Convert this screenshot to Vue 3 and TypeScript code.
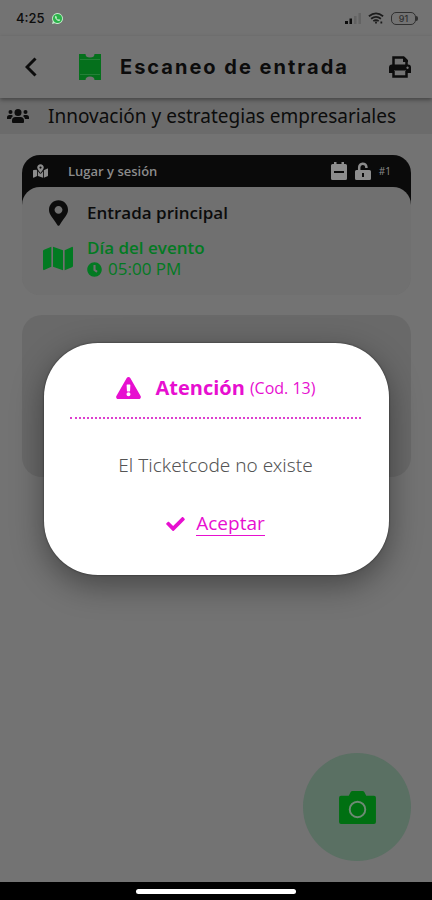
<script setup lang="ts">
import { ref } from 'vue'

interface Alert {
  title: string
  code: string
  message: string
}

const alert = ref<Alert | null>({
  title: 'Atención',
  code: '(Cod. 13)',
  message: 'El Ticketcode no existe',
})

const eventName = 'Innovación y estrategias empresariales'

function accept(): void {
  alert.value = null
}
</script>

<template>
  <div class="app">
    <div class="status">
      <span class="time">4:25</span>
      <svg class="chat" viewBox="0 0 24 24" aria-hidden="true">
        <path class="chat-edge" d="M12 0a12 12 0 1 1-6 22.4L0 24l1.7-6A12 12 0 0 1 12 0z" />
        <circle class="chat-fill" cx="12" cy="12" r="10" />
        <path class="chat-edge" d="M8.500 6c-1.500.5-2.300 2-1.800 3.800 1 3.500 3.800 6.300 7.500 7.400 1.800.5 3.300-.3 3.800-1.900l-3-2-1.500 1.300c-1.800-.8-3-2-3.800-3.700L11 9.300z" />
      </svg>
      <span class="spacer"></span>
      <svg class="signal" viewBox="0 0 16 12" aria-hidden="true">
        <path class="on" d="M0 9h3v3H0zM4.500 6.500h2.500V12H4.500z" />
        <path class="off" d="M9 4h2.500v8H9zM13.500 1H16v11h-2.500z" />
      </svg>
      <svg class="wifi" viewBox="0 0 18 14" aria-hidden="true">
        <path d="M1 4.500Q9-2 17 4.500M3.500 7.300Q9 3 14.500 7.300M6 10Q9 7.600 12 10" />
        <path d="M9 10.500v2M15 10.500v2" />
      </svg>
      <span class="battery">91</span>
    </div>

    <header class="header">
      <button class="icon-button" type="button" aria-label="Atrás">
        <svg class="back" viewBox="0 0 12 20" aria-hidden="true"><path d="M10.500 1.500 2 10l8.500 8.500" /></svg>
      </button>
      <svg class="ticket" viewBox="0 0 22 28" aria-hidden="true">
        <path d="M0 1h6.500a4.500 3.500 0 0 0 9 0H22v26h-6.500a4.500 3.500 0 0 0-9 0H0z" />
        <path class="perforation" d="M1 6.500h20M1 21.500h20" />
      </svg>
      <h1>Escaneo de entrada</h1>
      <button class="icon-button" type="button" aria-label="Imprimir">
        <svg class="printer" viewBox="0 0 22 22" aria-hidden="true">
          <path class="line" d="M4.500 9V1.500h10l3 3V9M4.500 15v5.500h13V15" />
          <path fill-rule="evenodd" d="M14 1h1.500L19 4.500V6h-5zM3 8.500h16a3 3 0 0 1 3 3V17h-5v-2.500H5V17H0v-5.500a3 3 0 0 1 3-3zM18.500 10.500a1.200 1.200 0 1 0 .1 0z" />
        </svg>
      </button>
    </header>

    <div class="event">
      <svg class="users" viewBox="0 0 22 16" aria-hidden="true">
        <circle cx="11" cy="4.500" r="3.500" /><circle cx="3.500" cy="4" r="2" /><circle cx="18.500" cy="4" r="2" />
        <path d="M5 14v-1.500A3.500 3.500 0 0 1 8.500 9h5a3.500 3.500 0 0 1 3.500 3.500V14a1 1 0 0 1-1 1H6a1 1 0 0 1-1-1zM0 9.500A2.500 2.500 0 0 1 2.500 7h2.300l1.200 1A5 5 0 0 0 4 11H0zM22 9.500A2.500 2.500 0 0 0 19.500 7h-2.300L16 8a5 5 0 0 1 2 3h4z" />
      </svg>
      <span>{{ eventName }}</span>
    </div>

    <main class="main">
      <section class="place">
        <div class="place-head">
          <svg class="map-pin" viewBox="0 0 576 512" aria-hidden="true">
            <path d="M288 0c-70 0-126 56-126 126 0 56 82 158 113 194a17 17 0 0 0 26 0c31-36 113-138 113-194C414 56 358 0 288 0zm0 168a42 42 0 1 1 0-84 42 42 0 0 1 0 84zM20 216A32 32 0 0 0 0 246v250c0 11 11 19 22 15l138-63V251c-9-16-16-32-21-47zM288 360c-14 0-27-6-37-17-19-22-40-48-59-75v180l192 64V268c-19 27-40 53-59 75-10 11-23 17-37 17zm266-199-138 63v288l140-56a32 32 0 0 0 20-30V176c0-11-11-19-22-15z" />
          </svg>
          <h2>Lugar y sesión</h2>
          <svg class="calendar" viewBox="0 0 16 18" aria-hidden="true">
            <path fill-rule="evenodd" d="M3 0h2.500v2h5V0H13v2h1.500A1.500 1.500 0 0 1 16 3.500v13a1.500 1.500 0 0 1-1.500 1.500h-13A1.500 1.500 0 0 1 0 16.500v-13A1.500 1.500 0 0 1 1.500 2H3zM3 9v2h10V9z" />
          </svg>
          <svg class="lock" viewBox="0 0 16 18" aria-hidden="true">
            <path class="shackle" d="M4.200 9V5.500a3.600 3.600 0 0 1 7.200-.5v1" />
            <path fill-rule="evenodd" d="M1.500 8h13A1.500 1.500 0 0 1 16 9.500v7a1.500 1.500 0 0 1-1.500 1.500h-13A1.500 1.500 0 0 1 0 16.500v-7A1.500 1.500 0 0 1 1.500 8zM7 11v4h2v-4z" />
          </svg>
          <span class="number">#1</span>
        </div>
        <div class="place-body">
          <svg class="marker" viewBox="0 0 384 512" aria-hidden="true">
            <path d="M172.268 501.670C26.970 291.031 0 269.413 0 192 0 85.961 85.961 0 192 0s192 85.961 192 192c0 77.413-26.970 99.031-172.268 309.670-9.535 13.774-29.930 13.773-39.464 0zM192 272c44.183 0 80-35.817 80-80s-35.817-80-80-80-80 35.817-80 80 35.817 80 80 80z" />
          </svg>
          <strong class="entrance">Entrada principal</strong>
          <svg class="map" viewBox="0 0 576 512" aria-hidden="true">
            <path d="M0 117.660v346.320c0 11.320 11.430 19.060 21.940 14.860L160 416V32L20.120 87.950A32.006 32.006 0 0 0 0 117.660zM192 416l192 64V96L192 32v384zM554.060 33.160L416 96v384l139.880-55.950A31.996 31.996 0 0 0 576 394.340V48.020c0-11.320-11.430-19.060-21.940-14.860z" />
          </svg>
          <div class="session">
            <strong>Día del evento</strong>
            <span class="hour">
              <svg class="clock" viewBox="0 0 512 512" aria-hidden="true">
                <path d="M256 8C119 8 8 119 8 256s111 248 248 248 248-111 248-248S393 8 256 8zm57.100 350.100L224.900 294c-3.100-2.300-4.900-5.900-4.900-9.700V116c0-6.600 5.400-12 12-12h48c6.600 0 12 5.400 12 12v137.700l63.500 46.200c5.400 3.900 6.500 11.400 2.600 16.800l-28.200 38.800c-3.900 5.300-11.400 6.500-16.800 2.600z" />
              </svg>
              05:00 PM
            </span>
          </div>
        </div>
      </section>

      <section class="result"></section>

      <button class="scan" type="button" aria-label="Escanear">
        <svg class="camera" viewBox="0 0 38 34" aria-hidden="true">
          <path d="M2 5h8l2-4q.5-1 2-1h10q1.500 0 2 1l2 4h8q2 0 2 2v25q0 2-2 2H2q-2 0-2-2V7q0-2 2-2z" />
          <circle cx="19" cy="19" r="8" />
        </svg>
      </button>
    </main>

    <footer class="nav"><span></span></footer>

    <div v-if="alert" class="overlay">
      <div class="dialog" role="alertdialog" aria-labelledby="alert-title" aria-describedby="alert-message">
        <div id="alert-title" class="dialog-head">
          <svg class="warning" viewBox="0 0 576 512" aria-hidden="true">
            <path d="M569.517 440.013C587.975 472.007 564.806 512 527.940 512H48.054c-36.937 0-59.999-40.055-41.577-71.987L246.423 23.985c18.467-32.009 64.720-31.951 83.154 0l239.940 416.028zM288 354c-25.405 0-46 20.595-46 46s20.595 46 46 46 46-20.595 46-46-20.595-46-46-46zm-43.673-165.346l7.418 136c.347 6.364 5.609 11.346 11.982 11.346h48.546c6.373 0 11.635-4.982 11.982-11.346l7.418-136c.375-6.874-5.098-12.654-11.982-12.654h-63.383c-6.884 0-12.356 5.780-11.981 12.654z" />
          </svg>
          <strong>{{ alert.title }}</strong>
          <span class="code">{{ alert.code }}</span>
        </div>
        <p id="alert-message">{{ alert.message }}</p>
        <button class="accept" type="button" @click="accept">
          <svg class="check" viewBox="0 64 512 384" aria-hidden="true">
            <path d="M173.898 439.404l-166.400-166.400c-9.997-9.997-9.997-26.206 0-36.204l36.203-36.204c9.997-9.998 26.207-9.998 36.204 0L192 312.690 432.095 72.596c9.997-9.997 26.207-9.997 36.204 0l36.203 36.204c9.997 9.997 9.997 26.206 0 36.204l-294.400 294.401c-9.998 9.997-26.207 9.997-36.204-.001z" />
          </svg>
          <span>Aceptar</span>
        </button>
      </div>
    </div>
  </div>
</template>

<style>
body {
  margin: 0;
  background: #737373;
}
</style>

<style scoped>
.app {
  position: relative;
  display: flex;
  flex-direction: column;
  min-height: 100vh;
  background: #737373;
  color: #0c0c0c;
  font-family: "Open Sans", "Noto Sans", sans-serif;
}
h1, h2, p {
  margin: 0;
}
svg {
  display: block;
  flex: none;
  fill: currentColor;
}
button {
  padding: 0;
  border: 0;
  background: none;
  color: inherit;
  font: inherit;
  cursor: pointer;
}
.status {
  display: flex;
  align-items: center;
  gap: 7px;
  height: 36px;
  padding: 0 16px;
}
.time {
  font: 500 13px/16px Inter, sans-serif;
}
.chat {
  width: 11px;
  height: 11px;
}
.chat-edge {
  fill: #c4eccb;
}
.chat-fill {
  fill: #2cb24a;
}
.spacer {
  flex: 1;
}
.signal {
  width: 16px;
  height: 12px;
}
.off {
  fill: #636363;
}
.wifi {
  width: 16px;
  height: 13px;
  fill: none;
  stroke: #1c1c1c;
  stroke-width: 2;
}
.battery {
  position: relative;
  width: 23px;
  border: 1px solid #303030;
  border-radius: 5px;
  color: #303030;
  font: 500 9px/11px Inter, sans-serif;
  text-align: center;
}
.battery::after {
  content: "";
  position: absolute;
  top: 3px;
  right: -3px;
  width: 2px;
  height: 5px;
  border-radius: 0 2px 2px 0;
  background: #303030;
}
.header {
  position: relative;
  display: flex;
  align-items: center;
  height: 62px;
  padding: 0 21px 0 20px;
  box-shadow: 0 2px 4px rgba(0, 0, 0, 0.35);
}
.icon-button {
  display: grid;
  place-items: center;
  width: 22px;
  height: 40px;
}
.back {
  width: 12px;
  height: 20px;
  fill: none;
  stroke: currentColor;
  stroke-width: 3;
}
.ticket {
  width: 22px;
  height: 28px;
  margin-left: 37px;
  color: #05701c;
}
.perforation {
  fill: none;
  stroke: #258038;
  stroke-width: 1;
}
h1 {
  flex: 1;
  margin-left: 19px;
  font: 700 20px/28px Inter, sans-serif;
  letter-spacing: 2px;
  white-space: nowrap;
}
.printer {
  width: 22px;
  height: 22px;
}
.line {
  fill: none;
  stroke: currentColor;
  stroke-width: 2.500;
}
.event {
  display: flex;
  align-items: center;
  gap: 19px;
  min-height: 36px;
  padding: 0 7px;
  background: #6b6b6b;
  font-family: "Noto Sans", sans-serif;
  font-size: 19px;
  line-height: 26px;
  white-space: nowrap;
}
.users {
  width: 22px;
  height: 16px;
}
.main {
  display: flex;
  flex: 1;
  flex-direction: column;
  padding: 21px 21px 21px 22px;
}
.place {
  border-radius: 18px;
  background: linear-gradient(#0a0a0a 52px, #707070 52px);
}
.place-head {
  display: flex;
  align-items: center;
  gap: 8px;
  height: 32px;
  padding: 0 20px 0 11px;
  color: #8c8c8c;
}
.map-pin {
  width: 15px;
  height: 14px;
}
h2 {
  flex: 1;
  margin-left: 12px;
  font-size: 13px;
  font-weight: 600;
  line-height: 18px;
}
.calendar, .lock {
  width: 16px;
  height: 18px;
}
.shackle {
  fill: none;
  stroke: currentColor;
  stroke-width: 2.500;
}
.number {
  font-size: 10px;
  line-height: 14px;
}
.place-body {
  display: grid;
  grid-template-columns: 30px 1fr;
  column-gap: 14px;
  row-gap: 11px;
  align-items: center;
  justify-items: start;
  padding: 13px 21px 16px;
  border-radius: 18px;
  background: #707070;
}
.marker {
  width: 19px;
  height: 26px;
  justify-self: center;
}
.entrance, .session strong {
  font-size: 17px;
  font-weight: 600;
  line-height: 22px;
}
.map {
  width: 30px;
  height: 27px;
  color: #027a22;
}
.session {
  display: flex;
  flex-direction: column;
  color: #027a22;
}
.hour {
  display: flex;
  align-items: center;
  gap: 6px;
  font-size: 17px;
  line-height: 20px;
}
.clock {
  width: 15px;
  height: 15px;
}
.result {
  height: 162px;
  margin-top: 20px;
  border-radius: 20px;
  background: #696969;
}
.scan {
  display: grid;
  place-items: center;
  align-self: flex-end;
  width: 108px;
  height: 108px;
  margin-top: auto;
  border-radius: 50%;
  background: #5a7063;
}
.camera {
  width: 37px;
  height: 33px;
  fill: #007012;
}
.camera circle {
  stroke: #6d8a74;
  stroke-width: 2;
}
.nav {
  display: flex;
  justify-content: center;
  align-items: center;
  height: 18px;
  background: #000;
}
.nav span {
  width: 37%;
  height: 5px;
  border-radius: 3px;
  background: #fff;
}
.overlay {
  position: absolute;
  inset: 0;
  display: flex;
  align-items: center;
  padding: 18px 43px 0 44px;
}
.dialog {
  display: flex;
  flex: 1;
  flex-direction: column;
  align-items: center;
  padding: 28px 28px 39px 26px;
  border-radius: 54px;
  background: #fff;
  box-shadow: 0 10px 32px rgba(0, 0, 0, 0.4), 0 0 2px rgba(0, 0, 0, 0.6);
  color: #e70fd0;
}
.dialog-head {
  display: flex;
  align-items: center;
  justify-content: center;
  align-self: stretch;
  padding: 2px 0 14px;
  border-bottom: 2px dotted #dd3fcf;
}
.dialog-head strong {
  margin: 0 5px 0 15px;
  font-size: 20px;
  line-height: 30px;
}
.code {
  font-size: 16px;
  line-height: 24px;
}
.warning {
  width: 25px;
  height: 22px;
}
p {
  margin: 32px 0;
  color: #555;
  font-family: "Noto Sans", sans-serif;
  font-size: 19px;
  font-weight: 300;
  line-height: 28px;
}
.accept {
  display: flex;
  align-items: center;
  gap: 11px;
}
.accept span {
  border-bottom: 1px solid #e70fd0;
  font-size: 19px;
  line-height: 24px;
}
.check {
  width: 19px;
  height: 14px;
}
</style>
